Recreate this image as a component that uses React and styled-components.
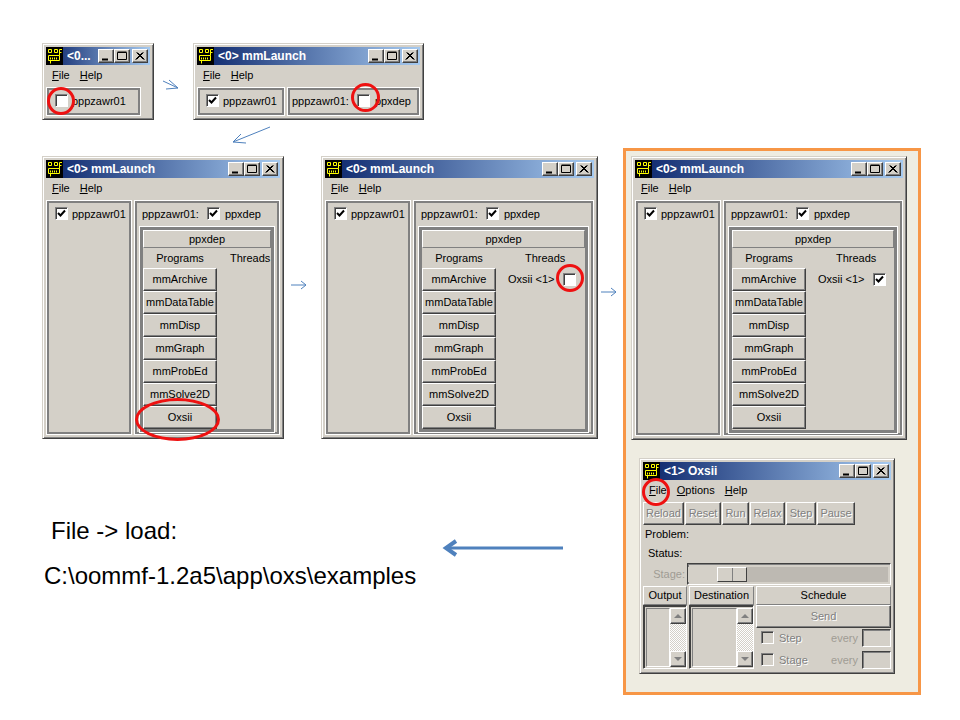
import React from "react";
import styled, { createGlobalStyle } from "styled-components";

const GlobalStyle = createGlobalStyle`
  html, body {
    margin: 0;
    padding: 0;
    background: #fff;
  }
`;

const FACE = "#d4d0c8";
const RAISED = `
  border: 1px solid;
  border-color: #fff #404040 #404040 #fff;
  box-shadow: inset -1px -1px 0 #808080;
  box-sizing: border-box;
`;

const Canvas = styled.div`
  position: relative;
  width: 960px;
  height: 720px;
  overflow: hidden;
  background: #fff;
  font-family: "Liberation Sans", Arial, sans-serif;
  font-size: 11px;
  color: #000;
`;

const Highlight = styled.div`
  position: absolute;
  left: 623px;
  top: 148px;
  width: 298px;
  height: 547px;
  box-sizing: border-box;
  background: #eeece1;
  border: 3px solid #f79646;
`;

const Win = styled.div`
  position: absolute;
  left: ${(p) => p.$x}px;
  top: ${(p) => p.$y}px;
  width: ${(p) => p.$w}px;
  height: ${(p) => p.$h}px;
  box-sizing: border-box;
  padding: 3px;
  display: flex;
  flex-direction: column;
  background: ${FACE};
  border: 1px solid;
  border-color: ${FACE} #404040 #404040 ${FACE};
  box-shadow: inset 1px 1px 0 #fff, inset -1px -1px 0 #808080;
`;

const TitleBar = styled.div`
  height: 18px;
  flex: none;
  display: flex;
  align-items: center;
  background: linear-gradient(to right, #0a246a, #a6caf0);
  padding-right: 2px;
`;

const TitleText = styled.span`
  flex: 1;
  margin-left: 4px;
  color: #fff;
  font-weight: bold;
  font-size: 12px;
  white-space: nowrap;
  overflow: hidden;
`;

const TitleBtn = styled.div`
  ${RAISED}
  width: 16px;
  height: 14px;
  margin-left: ${(p) => p.$gap || 0}px;
  background: ${FACE};
  display: flex;
  align-items: center;
  justify-content: center;
`;

const MenuBar = styled.div`
  height: 22px;
  flex: none;
  box-sizing: border-box;
  padding: 0 0 2px 6px;
  display: flex;
  align-items: center;
  gap: 10px;
`;

const Panes = styled.div`
  flex: 1;
  display: flex;
  gap: 2px;
  min-height: 0;
`;

const Pane = styled.div`
  box-sizing: border-box;
  border: 1px solid #fff;
  box-shadow: inset 0 0 0 2px #808080;
  flex: ${(p) => (p.$grow ? "1" : "none")};
  width: ${(p) => (p.$w ? `${p.$w}px` : "auto")};
  min-width: 0;
  display: flex;
  flex-direction: column;
`;

const HostRow = styled.div`
  height: 25px;
  flex: none;
  display: flex;
  align-items: center;
  padding-left: ${(p) => p.$left}px;
  white-space: nowrap;
`;

const Check = styled.span`
  width: 13px;
  height: 13px;
  flex: none;
  box-sizing: border-box;
  margin: 0 ${(p) => p.$after || 5}px 0 ${(p) => p.$before || 0}px;
  background: #fff;
  border: 1px solid;
  border-color: #808080 #fff #fff #808080;
  box-shadow: inset 1px 1px 0 #404040;
  display: inline-flex;
  align-items: center;
  justify-content: center;
`;

const InnerPane = styled.div`
  flex: 1;
  margin: 0 4px 1px 4px;
  box-sizing: border-box;
  border: 1px solid #fff;
  box-shadow: inset 0 0 0 3px #808080;
  padding: 3px;
  display: flex;
  flex-direction: column;
  min-height: 0;
`;

const DomainHeader = styled.div`
  height: 18px;
  flex: none;
  box-sizing: border-box;
  border: 1px solid;
  border-color: #fff #808080 #808080 #fff;
  text-align: center;
  line-height: 16px;
`;

const Columns = styled.div`
  flex: 1;
  display: flex;
  min-height: 0;
`;

const ProgramCol = styled.div`
  width: 74px;
  flex: none;
  display: flex;
  flex-direction: column;
`;

const ThreadCol = styled.div`
  flex: 1;
  min-width: 0;
  padding-left: 12px;
  white-space: nowrap;
`;

const ColLabel = styled.div`
  height: 20px;
  line-height: 21px;
  text-align: center;
`;

const ThreadLabel = styled.div`
  height: 20px;
  line-height: 21px;
  padding-left: ${(p) => p.$left}px;
`;

const ThreadRow = styled.div`
  display: flex;
  align-items: center;
  height: 22px;
`;

const PushBtn = styled.div`
  ${RAISED}
  height: 23px;
  flex: none;
  text-align: center;
  line-height: 20px;
  white-space: nowrap;
`;

const ToolBar = styled.div`
  height: 23px;
  flex: none;
  display: flex;
  gap: 1px;
`;

const ToolBtn = styled.div`
  ${RAISED}
  width: ${(p) => p.$w}px;
  text-align: center;
  line-height: 21px;
  color: #808080;
  text-shadow: 1px 1px 0 #fff;
`;

const InfoRow = styled.div`
  height: 19px;
  flex: none;
  line-height: 18px;
  padding-left: ${(p) => p.$left}px;
`;

const StageRow = styled.div`
  height: 22px;
  flex: none;
  display: flex;
  align-items: center;
`;

const StageLabel = styled.div`
  width: 44px;
  flex: none;
  text-align: right;
  padding-right: 2px;
  box-sizing: border-box;
  color: #a09c94;
`;

const Trough = styled.div`
  flex: 1;
  height: 22px;
  box-sizing: border-box;
  border: 1px solid;
  border-color: #404040 #fff #fff #404040;
  box-shadow: inset 1px 1px 0 #808080;
  padding: 3px 2px 2px 0;
  display: flex;
`;

const TroughFill = styled.div`
  flex: 1;
  background: linear-gradient(to right, ${FACE} 30px, #bdb9b2 60px);
  padding-left: 29px;
`;

const Thumb = styled.div`
  width: 30px;
  height: 100%;
  box-sizing: border-box;
  background: ${FACE};
  border: 1px solid;
  border-color: #fff #404040 #404040 #fff;
  display: flex;
`;

const ThumbHalf = styled.div`
  flex: 1;
  border-right: ${(p) => (p.$split ? "1px solid #808080" : "none")};
`;

const LowerGrid = styled.div`
  flex: 1;
  margin-top: 1px;
  display: grid;
  grid-template-columns: 44px 65px 1fr;
  grid-template-rows: 19px 1fr;
  column-gap: 2px;
  row-gap: 0;
`;

const HeadCell = styled.div`
  box-sizing: border-box;
  border: 1px solid;
  border-color: #fff #808080 #808080 #fff;
  text-align: center;
  line-height: 17px;
  white-space: nowrap;
`;

const ListBox = styled.div`
  box-sizing: border-box;
  margin-bottom: 3px;
  border: 1px solid;
  border-color: #404040 #fff #fff #404040;
  box-shadow: inset 1px 1px 0 #404040;
  padding: 2px 0 0 2px;
  display: flex;
`;

const ListArea = styled.div`
  flex: 1;
  margin-bottom: 1px;
  box-sizing: border-box;
  border: 1px solid;
  border-color: #808080 #fff #fff #808080;
`;

const ScrollBar = styled.div`
  width: 16px;
  flex: none;
  display: flex;
  flex-direction: column;
  margin-bottom: 1px;
  background: repeating-conic-gradient(#fff 0 25%, ${FACE} 0 50%) 0 0 / 2px 2px;
`;

const ScrollTrack = styled.div`
  flex: 1;
`;

const ScrollBtn = styled.div`
  ${RAISED}
  height: 16px;
  background: ${FACE};
  display: flex;
  align-items: center;
  justify-content: center;
`;

const Triangle = styled.span`
  width: 0;
  height: 0;
  border-left: 4px solid transparent;
  border-right: 4px solid transparent;
  border-${(p) => (p.$down ? "top" : "bottom")}: 4px solid #808080;
`;

const SchedulePanel = styled.div`
  display: flex;
  flex-direction: column;
`;

const SendBtn = styled(PushBtn)`
  color: #808080;
  text-shadow: 1px 1px 0 #fff;
`;

const ScheduleRow = styled.div`
  height: 22px;
  box-sizing: border-box;
  padding: 0 0 3px 5px;
  display: flex;
  align-items: center;
  color: #808080;
  text-shadow: 1px 1px 0 #fff;
`;

const BlankCheck = styled(Check)`
  background: ${FACE};
  box-shadow: inset 1px 1px 0 #404040;
`;

const ScheduleName = styled.span`
  flex: 1;
`;

const EveryLabel = styled.span`
  margin-right: 4px;
  color: #a09c94;
  text-shadow: none;
`;

const EveryInput = styled.span`
  width: 29px;
  height: 18px;
  box-sizing: border-box;
  border: 1px solid;
  border-color: #404040 #fff #fff #404040;
  box-shadow: inset 1px 1px 0 #808080;
`;

const RedMark = styled.div`
  position: absolute;
  left: ${(p) => p.$x}px;
  top: ${(p) => p.$y}px;
  width: ${(p) => p.$w}px;
  height: ${(p) => p.$h}px;
  box-sizing: border-box;
  border: 3px solid #ee1111;
  border-radius: 50%;
`;

const Arrows = styled.svg`
  position: absolute;
  left: 0;
  top: 0;
  width: 960px;
  height: 720px;
  pointer-events: none;
`;

const Note = styled.div`
  position: absolute;
  left: 44px;
  top: 508px;
  font-size: 24px;
  line-height: 45px;
  white-space: nowrap;
`;

const NoteFirst = styled.div`
  padding-left: 7px;
`;

const programs = ["mmArchive", "mmDataTable", "mmDisp", "mmGraph", "mmProbEd", "mmSolve2D", "Oxsii"];

const Logo = () => (
  <svg width="17" height="18" viewBox="0 0 17 18" style={{ flex: "none" }}>
    <rect width="17" height="18" fill="#000" />
    <path d="M2.5 2.5h3v3h-3zM8.5 2.5h3v3h-3z" fill="none" stroke="#ff0" strokeWidth="1" />
    <path d="M16 2.5H13.5V8.5H2.5V13.5H13.5V8.5M13.5 5.5H15.5M4.5 13.5V16.5" fill="none" stroke="#ff0" strokeWidth="1" />
    <path d="M4.5 10.5v2M6.5 10.5v2M8.5 10.5v2M10.5 10.5v2" stroke="#ff0" strokeWidth="1" />
  </svg>
);

const Glyph = ({ d, w = 1 }) => (
  <svg width="12" height="10" viewBox="0 0 12 10">
    <path d={d} fill="none" stroke="#000" strokeWidth={w} />
  </svg>
);

const Caption = ({ text }) => (
  <TitleBar>
    <Logo />
    <TitleText>{text}</TitleText>
    <TitleBtn>
      <Glyph d="M2 8.5H8" w={2} />
    </TitleBtn>
    <TitleBtn>
      <Glyph d="M1.5 1.5H10.5V8.5H1.5ZM1.5 1H10.5" />
    </TitleBtn>
    <TitleBtn $gap={2}>
      <Glyph d="M2.5 1.5L9.5 8.5M9.5 1.5L2.5 8.5M3.5 1.5L10.5 8.5M8.5 1.5L1.5 8.5" />
    </TitleBtn>
  </TitleBar>
);

const Menu = ({ items }) => (
  <MenuBar>
    {items.map((m) => (
      <span key={m}>
        <u>{m[0]}</u>
        {m.slice(1)}
      </span>
    ))}
  </MenuBar>
);

const Tick = () => (
  <svg width="9" height="9" viewBox="0 0 9 9">
    <path d="M1 4L3.5 6.5L8 1.5" fill="none" stroke="#000" strokeWidth="2" />
  </svg>
);

const HostCheck = ({ checked, before, after }) => (
  <Check $before={before} $after={after}>
    {checked && <Tick />}
  </Check>
);

const LaunchWindow = ({ x, y, w, h, threadLeft, thread, threadChecked }) => (
  <Win $x={x} $y={y} $w={w} $h={h}>
    <Caption text="<0> mmLaunch" />
    <Menu items={["File", "Help"]} />
    <Panes>
      <Pane $w={86}>
        <HostRow $left={8}>
          <HostCheck checked after={4} />
          pppzawr01
        </HostRow>
      </Pane>
      <Pane $grow>
        <HostRow $left={7}>
          pppzawr01:
          <HostCheck checked before={8} after={5} />
          ppxdep
        </HostRow>
        <InnerPane>
          <DomainHeader>ppxdep</DomainHeader>
          <Columns>
            <ProgramCol>
              <ColLabel>Programs</ColLabel>
              {programs.map((name) => (
                <PushBtn key={name}>{name}</PushBtn>
              ))}
            </ProgramCol>
            <ThreadCol>
              <ThreadLabel $left={threadLeft}>Threads</ThreadLabel>
              {thread && (
                <ThreadRow>
                  Oxsii &lt;1&gt;
                  <HostCheck checked={threadChecked} before={9} />
                </ThreadRow>
              )}
            </ThreadCol>
          </Columns>
        </InnerPane>
      </Pane>
    </Panes>
  </Win>
);

const ScrollList = () => (
  <ListBox>
    <ListArea />
    <ScrollBar>
      <ScrollBtn>
        <Triangle />
      </ScrollBtn>
      <ScrollTrack />
      <ScrollBtn>
        <Triangle $down />
      </ScrollBtn>
    </ScrollBar>
  </ListBox>
);

const tools = [
  ["Reload", 41],
  ["Reset", 36],
  ["Run", 27],
  ["Relax", 35],
  ["Step", 30],
  ["Pause", 38],
];

const OxsiiWindow = () => (
  <Win $x={639} $y={458} $w={256} $h={216}>
    <Caption text="<1> Oxsii" />
    <Menu items={["File", "Options", "Help"]} />
    <ToolBar>
      {tools.map(([name, width]) => (
        <ToolBtn key={name} $w={width}>
          {name}
        </ToolBtn>
      ))}
    </ToolBar>
    <InfoRow $left={2}>Problem:</InfoRow>
    <InfoRow $left={5}>Status:</InfoRow>
    <StageRow>
      <StageLabel>Stage:</StageLabel>
      <Trough>
        <TroughFill>
          <Thumb>
            <ThumbHalf $split />
            <ThumbHalf />
          </Thumb>
        </TroughFill>
      </Trough>
    </StageRow>
    <LowerGrid>
      <HeadCell>Output</HeadCell>
      <HeadCell>Destination</HeadCell>
      <HeadCell>Schedule</HeadCell>
      <ScrollList />
      <ScrollList />
      <SchedulePanel>
        <SendBtn>Send</SendBtn>
        <ScheduleRow>
          <BlankCheck />
          <ScheduleName>Step</ScheduleName>
          <EveryLabel>every</EveryLabel>
          <EveryInput />
        </ScheduleRow>
        <ScheduleRow>
          <BlankCheck />
          <ScheduleName>Stage</ScheduleName>
          <EveryLabel>every</EveryLabel>
          <EveryInput />
        </ScheduleRow>
      </SchedulePanel>
    </LowerGrid>
  </Win>
);

const Thin = ({ d }) => <path d={d} fill="none" stroke="#4f81bd" strokeWidth="1" />;

export default function App() {
  return (
    <Canvas>
      <GlobalStyle />
      <Highlight />

      <Win $x={42} $y={43} $w={112} $h={77}>
        <Caption text="<0..." />
        <Menu items={["File", "Help"]} />
        <Panes>
          <Pane $w={95}>
            <HostRow $left={8}>
              <HostCheck after={4} />
              pppzawr01
            </HostRow>
          </Pane>
        </Panes>
      </Win>

      <Win $x={193} $y={43} $w={231} $h={77}>
        <Caption text="<0> mmLaunch" />
        <Menu items={["File", "Help"]} />
        <Panes>
          <Pane $w={88}>
            <HostRow $left={8}>
              <HostCheck checked after={4} />
              pppzawr01
            </HostRow>
          </Pane>
          <Pane $grow>
            <HostRow $left={4}>
              pppzawr01:
              <HostCheck before={8} after={5} />
              ppxdep
            </HostRow>
          </Pane>
        </Panes>
      </Win>

      <LaunchWindow x={42} y={156} w={242} h={283} threadLeft={1} />
      <LaunchWindow x={321} y={156} w={277} h={283} threadLeft={17} thread />
      <LaunchWindow x={631} y={156} w={276} h={284} threadLeft={18} thread threadChecked />
      <OxsiiWindow />

      <Note>
        <NoteFirst>File -&gt; load:</NoteFirst>
        <div>C:\oommf-1.2a5\app\oxs\examples</div>
      </Note>

      <RedMark $x={47} $y={87} $w={28} $h={28} />
      <RedMark $x={351} $y={83} $w={29} $h={29} />
      <RedMark $x={135} $y={398} $w={85} $h={43} />
      <RedMark $x={556} $y={264} $w={28} $h={28} />
      <RedMark $x={642} $y={478} $w={28} $h={28} />

      <Arrows viewBox="0 0 960 720">
        <Thin d="M163 81L178 88M169 80L178 88L166 89" />
        <Thin d="M270 127L233 142M241 134L233 142L246 143" />
        <Thin d="M291 285H306M301 281L306 285L301 289" />
        <Thin d="M601 292H616M611 288L616 292L611 296" />
        <path d="M563 548H448" stroke="#4f81bd" strokeWidth="3" fill="none" />
        <path d="M456 541L446 548L456 555" stroke="#4f81bd" strokeWidth="4" fill="none" />
      </Arrows>
    </Canvas>
  );
}
